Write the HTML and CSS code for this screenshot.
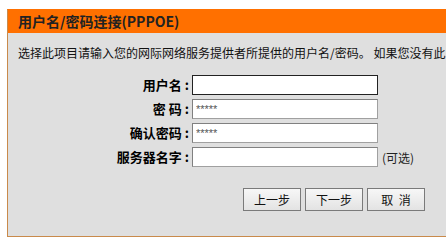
FILE: index.html
```html
<!DOCTYPE html>
<html lang="zh-CN">
<head>
    <meta charset="UTF-8">
    <title>PPPOE</title>
    <link rel="stylesheet" href="styles.css">
</head>
<body>
    <div class="box">
        <div class="box-title">用户名/密码连接(PPPOE)</div>
        <p class="desc">选择此项目请输入您的网际网络服务提供者所提供的用户名/密码。 如果您没有此</p>

        <div class="form">
            <label class="lbl">用户名 :</label>
            <div class="field"><input type="text" class="txt focus"></div>

            <label class="lbl">密 码 :</label>
            <div class="field"><input type="text" class="txt" value="*****"></div>

            <label class="lbl">确认密码 :</label>
            <div class="field"><input type="text" class="txt" value="*****"></div>

            <label class="lbl">服务器名字 :</label>
            <div class="field"><input type="text" class="txt"><span class="opt">(可选)</span></div>
        </div>

        <div class="buttons">
            <button class="btn">上一步</button>
            <button class="btn">下一步</button>
            <button class="btn">取&nbsp;&nbsp;消</button>
        </div>
    </div>
</body>
</html>
```

FILE: styles.css
```css
html, body {
    margin: 0;
    padding: 0;
    background: #fff;
    overflow: hidden;
}
body {
    font-family: "Noto Sans CJK SC", sans-serif;
    font-size: 12px;
    color: #000;
}
.box {
    margin: 9px 0 0 7px;
    width: 560px;
    height: 228px;
    box-sizing: border-box;
    background: #dfdfdf;
    border: 1px solid #c98a4b;
    border-top-color: #ff7000;
}
.box-title {
    background: #ff7000;
    height: 23px;
    line-height: 23px;
    padding-left: 10px;
    font-size: 14px;
    font-weight: bold;
    color: #222;
}
.desc {
    margin: 10px 0 0 10px;
    line-height: 20px;
    white-space: nowrap;
    color: #111;
}
.form {
    display: grid;
    grid-template-columns: 183px auto;
    row-gap: 4px;
    margin-top: 12px;
}
.lbl {
    height: 20px;
    line-height: 20px;
    text-align: right;
    font-weight: bold;
    font-size: 13px;
    padding-right: 2px;
}
.field {
    display: flex;
    align-items: center;
    height: 20px;
    padding-left: 1px;
}
.txt {
    box-sizing: border-box;
    width: 186px;
    height: 20px;
    margin: 0;
    padding: 0 3px;
    border: 1px solid #808080;
    border-right-color: #a0a0a0;
    border-bottom-color: #a0a0a0;
    background: #fff;
    font-family: "Liberation Sans", sans-serif;
    font-size: 11px;
    color: #555;
    outline: none;
}
.txt.focus {
    border: 1px solid #222;
}
.opt {
    margin-left: 4px;
    color: #222;
}
.buttons {
    display: flex;
    gap: 4px;
    margin: 21px 0 0 235px;
}
.btn {
    width: 58px;
    height: 23px;
    padding: 0;
    border: 1px solid #7a7a7a;
    background: linear-gradient(#f7f7f7, #e3e3e3);
    font-family: "Noto Sans CJK SC", sans-serif;
    font-size: 12px;
    color: #111;
}
```
